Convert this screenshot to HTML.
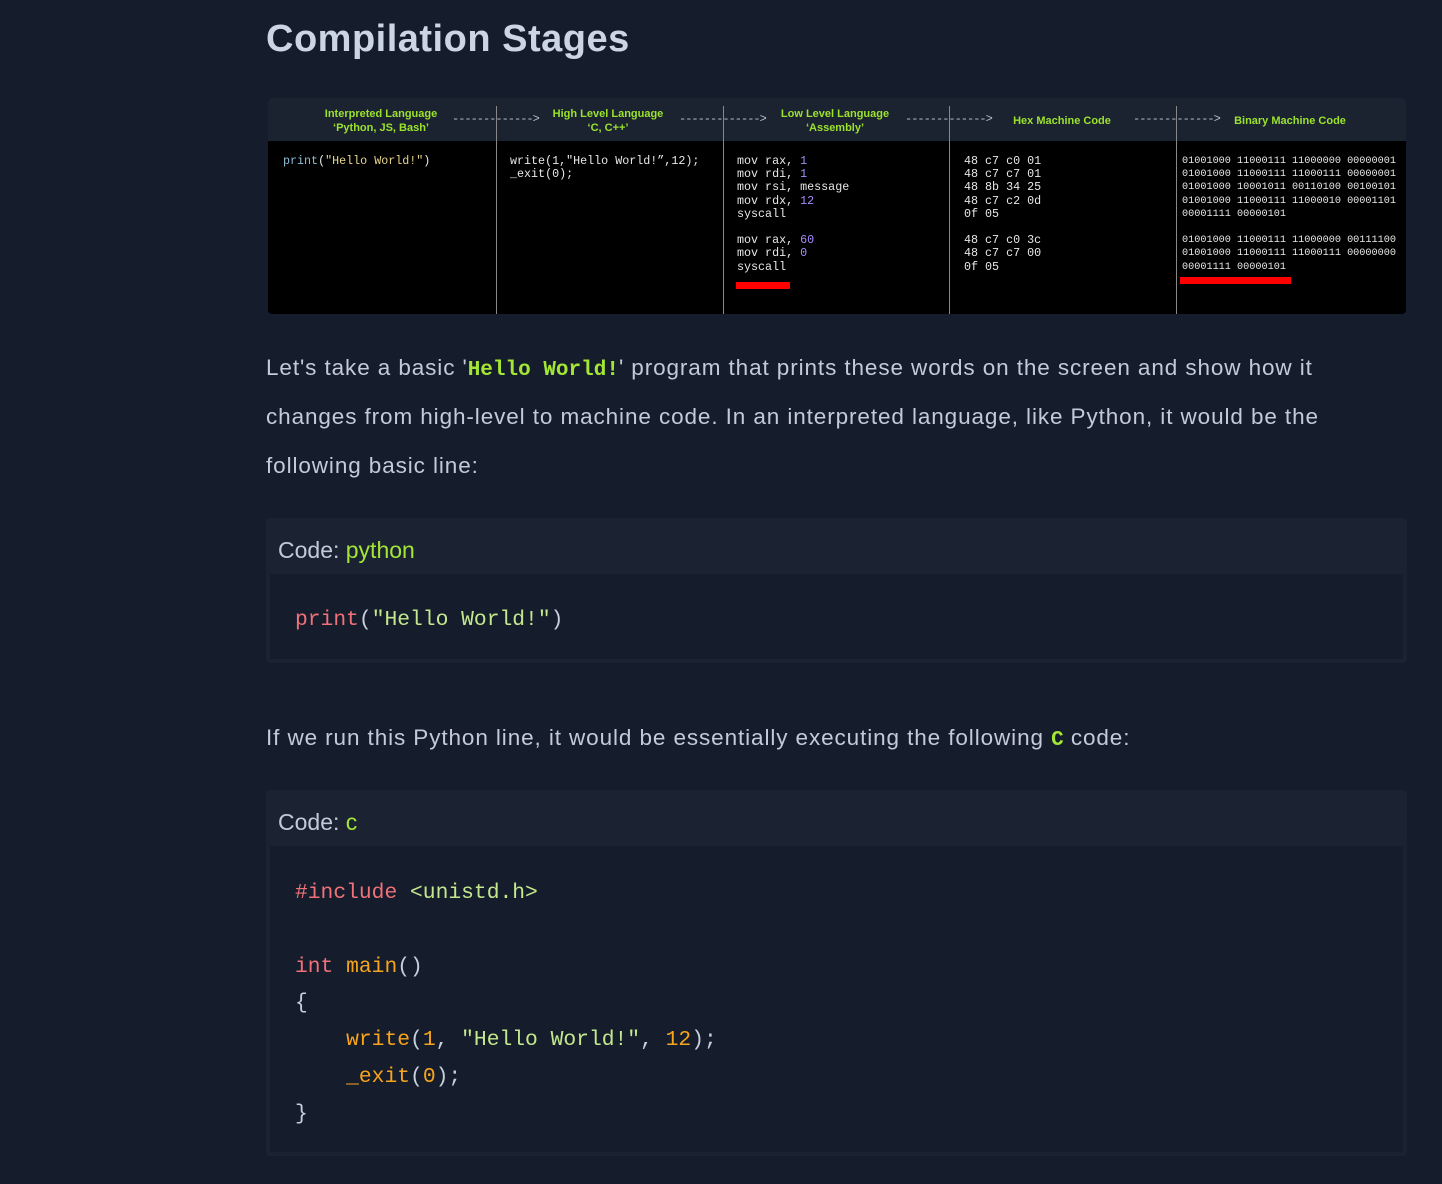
<!DOCTYPE html>
<html><head><meta charset="utf-8"><style>
body{margin:0;background:#151c2b;width:1442px;height:1184px;overflow:hidden;font-family:"Liberation Sans",sans-serif;position:relative}
.a{position:absolute}
h1{position:absolute;left:266px;top:18px;margin:0;font-size:38px;font-weight:bold;color:#ccd5e3;letter-spacing:0.5px}
.img{left:268px;top:98px;width:1138px;height:216px;background:#000;border-radius:4px;overflow:hidden}
.hdr{left:0;top:0;width:1138px;height:43px;background:#1b2230}
.lab{position:absolute;color:#9be22d;font-size:11px;font-weight:bold;text-align:center;line-height:14px;width:160px}
.arr{position:absolute;color:#b8c0d0;font-size:12px;font-family:"Liberation Mono",monospace;top:14px;letter-spacing:-1px}
.div{position:absolute;top:8px;width:1px;height:208px;background:#888}
.sm{position:absolute;font-family:"Liberation Mono",monospace;color:#e8e8e8;font-size:11.7px;line-height:13.2px;white-space:pre;top:57px}
.bin{font-size:10.2px}
.red{position:absolute;height:7px;background:#f00}
.p{position:absolute;left:266px;color:#c3cad8;font-size:22.5px;line-height:49px;white-space:nowrap;letter-spacing:0.9px}
.p code{font-family:"Liberation Mono",monospace;color:#a3e635;font-weight:bold;font-size:21px;line-height:10px;letter-spacing:0}
.box{position:absolute;left:266px;width:1141px;background:#1b2232;border-radius:4px}
.bh{height:56px;color:#c3cad8;font-size:23px;line-height:64px;padding-left:12px}
.bh span{color:#a3e635}
.bb{background:#151c2b;margin:0 4px 4px 4px;font-family:"Liberation Mono",monospace;font-size:21.3px;color:#c8cfdc;white-space:pre;padding-left:25px}
.r{color:#f07178}.g{color:#c3e88d}.o{color:#f8a51d}.pu{color:#a78bfa}.bl{color:#8fbcd4}.y{color:#e8d58b}
</style></head><body>
<h1>Compilation Stages</h1>
<div class="a img">
 <div class="a hdr"></div>
 <div class="lab" style="left:33px;top:9px">Interpreted Language<br>‘Python, JS, Bash’</div>
 <div class="arr" style="left:184px">-------------&gt;</div>
 <div class="lab" style="left:260px;top:9px">High Level Language<br>‘C, C++’</div>
 <div class="arr" style="left:411px">-------------&gt;</div>
 <div class="lab" style="left:487px;top:9px">Low Level Language<br>‘Assembly’</div>
 <div class="arr" style="left:637px">-------------&gt;</div>
 <div class="lab" style="left:714px;top:16px">Hex Machine Code</div>
 <div class="arr" style="left:865px">-------------&gt;</div>
 <div class="lab" style="left:942px;top:16px">Binary Machine Code</div>
 <div class="div" style="left:228px"></div><div class="div" style="left:455px"></div><div class="div" style="left:681px"></div><div class="div" style="left:908px"></div>
 <div class="sm" style="left:15px"><span class="bl">print</span>(<span class="y">"Hello World!"</span>)</div>
 <div class="sm" style="left:242px">write(1,"Hello World!”,12);
_exit(0);</div>
 <div class="sm" style="left:469px">mov rax, <span class="pu">1</span>
mov rdi, <span class="pu">1</span>
mov rsi, message
mov rdx, <span class="pu">12</span>
syscall

mov rax, <span class="pu">60</span>
mov rdi, <span class="pu">0</span>
syscall</div>
 <div class="red" style="left:468px;top:184px;width:54px"></div>
 <div class="sm" style="left:696px">48 c7 c0 01
48 c7 c7 01
48 8b 34 25
48 c7 c2 0d
0f 05

48 c7 c0 3c
48 c7 c7 00
0f 05</div>
 <div class="sm bin" style="left:914px">01001000 11000111 11000000 00000001
01001000 11000111 11000111 00000001
01001000 10001011 00110100 00100101
01001000 11000111 11000010 00001101
00001111 00000101

01001000 11000111 11000000 00111100
01001000 11000111 11000111 00000000
00001111 00000101</div>
 <div class="red" style="left:912px;top:179px;width:111px"></div>
</div>
<div class="p" style="top:343px">Let's take a basic '<code>Hello World!</code>' program that prints these words on the screen and show how it<br>changes from high-level to machine code. In an interpreted language, like Python, it would be the<br>following basic line:</div>
<div class="box" style="top:518px;height:145px">
 <div class="bh">Code: <span>python</span></div>
 <div class="bb" style="height:85px;line-height:92px"><span class="r">print</span>(<span class="g">"Hello World!"</span>)</div>
</div>
<div class="p" style="top:713px">If we run this Python line, it would be essentially executing the following <code>C</code> code:</div>
<div class="box" style="top:790px;height:366px">
 <div class="bh">Code: <span>c</span></div>
 <div class="bb" style="height:306px;line-height:36.8px;padding-top:29px;box-sizing:border-box"><span class="r">#include</span> <span class="g">&lt;unistd.h&gt;</span>

<span class="r">int</span> <span class="o">main</span>()
{
    <span class="o">write</span>(<span class="o">1</span>, <span class="g">"Hello World!"</span>, <span class="o">12</span>);
    <span class="o">_exit</span>(<span class="o">0</span>);
}</div>
</div>
</body></html>
